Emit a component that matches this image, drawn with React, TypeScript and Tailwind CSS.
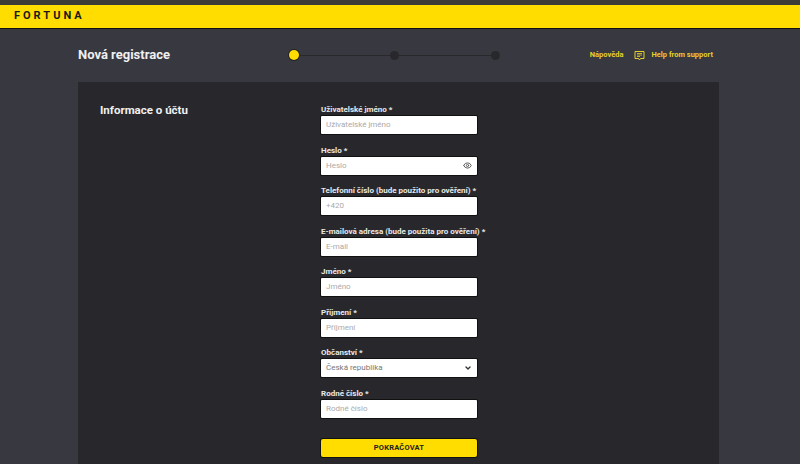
import { ChevronDown, Eye } from "lucide-react";

const fields = [
  { label: "Uživatelské jméno *", placeholder: "Uživatelské jméno" },
  { label: "Heslo *", placeholder: "Heslo", eye: true },
  { label: "Telefonní číslo (bude použito pro ověření) *", placeholder: "+420" },
  { label: "E-mailová adresa (bude použita pro ověření) *", placeholder: "E-mail" },
  { label: "Jméno *", placeholder: "Jméno" },
  { label: "Příjmení *", placeholder: "Příjmení" },
  { label: "Občanství *", placeholder: "Česká republika", select: true },
  { label: "Rodné číslo *", placeholder: "Rodné číslo" },
];

const Field: React.FC<{ label: string; placeholder: string; eye?: boolean; select?: boolean }> = ({
  label,
  placeholder,
  eye,
  select,
}) => (
  <div className="h-[40.5px] w-[156px]">
    <div className="h-[13px] text-[8px] leading-[13px] font-bold whitespace-nowrap text-[#e8e8e8]">{label}</div>
    <div className="flex h-[18px] items-center justify-between rounded-[1px] bg-white pr-[5px] pl-[5px] shadow-[0_0_0_1px_#111]">
      <span className={select ? "text-[8px] text-[#777]" : "text-[8px] text-[#aaa]"}>{placeholder}</span>
      {eye && <Eye size={9} strokeWidth={2.5} className="text-[#555]" />}
      {select && <ChevronDown size={8} strokeWidth={4} className="text-[#333]" />}
    </div>
  </div>
);

export default function App() {
  return (
    <div className="h-[464px] w-[800px] overflow-hidden bg-[#383840] font-['Roboto',sans-serif]">
      <div className="h-[5px] bg-[#3d3d38]" />
      <div className="flex h-[23px] items-center bg-[#ffdd00] pl-[14px] shadow-[0_1px_0_#111]">
        <span className="text-[11px] font-bold tracking-[3px] text-[#1a1a1a]">FORTUNA</span>
      </div>

      <div className="flex h-[54px] items-center pr-[87px] pl-[78px]">
        <h1 className="w-[211px] text-[13px] font-bold text-[#f0f0f0]">Nová registrace</h1>
        <div className="flex items-center">
          <div className="h-[10px] w-[10px] rounded-full bg-[#ffdd00] shadow-[0_0_0_1px_#222]" />
          <div className="h-px w-[91px] bg-[#28282c]" />
          <div className="h-[9px] w-[9px] rounded-full bg-[#28282c]" />
          <div className="h-px w-[92px] bg-[#28282c]" />
          <div className="h-[9px] w-[9px] rounded-full bg-[#28282c]" />
        </div>
        <div className="ml-auto flex items-center text-[7.5px] font-bold text-[#e6cf2a]">
          <span>Nápověda</span>
          <svg width="11" height="11" viewBox="0 0 11 11" fill="none" className="mr-[6px] ml-[11px]">
            <path d="M1 1.5h9v7H6.5L5.5 10 4.5 8.5H1z" stroke="#e6cf2a" strokeWidth="1" strokeLinejoin="round" />
            <path d="M3 3.5h5M3 5h5M3 6.5h3" stroke="#e6cf2a" strokeWidth="0.8" />
          </svg>
          <span>Help from support</span>
        </div>
      </div>

      <div className="ml-[78px] flex h-[400px] w-[641px] bg-[#28282c] pt-[21px]">
        <h2 className="w-[243px] pl-[22px] text-[11.5px] leading-[14px] font-bold text-[#f0f0f0]">Informace o účtu</h2>
        <div>
          {fields.map(field => (
            <Field key={field.label} {...field} />
          ))}
          <button className="mt-[12px] h-[18px] w-[156px] rounded-[2px] bg-[#ffdd00] text-[7.5px] font-bold tracking-[0.2px] text-[#222] shadow-[0_0_0_1px_#111]">
            POKRAČOVAT
          </button>
        </div>
      </div>
    </div>
  );
}
